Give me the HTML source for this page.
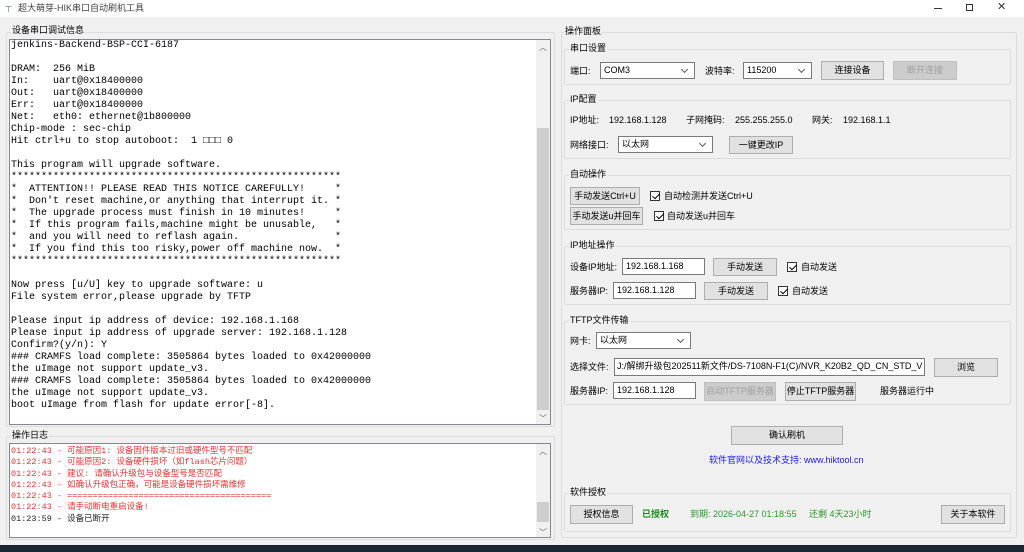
<!DOCTYPE html>
<html><head><meta charset="utf-8"><style>
*{box-sizing:border-box;margin:0;padding:0}
body{width:1024px;height:552px;background:#f0f0f0;position:relative;overflow:hidden;font-family:"Liberation Sans","Noto Sans CJK SC",sans-serif;font-size:9px;color:#000}
.a{position:absolute}
.fr{position:absolute;border:1px solid #dcdcdc;border-radius:2px}
.lg{position:absolute;background:#f0f0f0;padding:0 1px;line-height:11px;font-size:9px;white-space:nowrap}
.t{position:absolute;white-space:nowrap;line-height:12px}
.btn{position:absolute;background:#e1e1e1;border:1px solid #adadad;text-align:center;line-height:16px;white-space:nowrap}
.dis{color:#a0a0a0;background:#cccccc;border-color:#bfbfbf}
.inp{position:absolute;background:#fff;border:1px solid #7a7a7a;line-height:15px;padding-left:3px;white-space:nowrap;overflow:hidden}
.cb{position:absolute;background:#fff;border:1px solid #7a7a7a;line-height:15px;padding-left:3px;white-space:nowrap}
.cb:after{content:"";position:absolute;right:7px;top:4px;width:4px;height:4px;border-right:1px solid #555;border-bottom:1px solid #555;transform:rotate(45deg)}
.chk{position:absolute;width:10px;height:10px;border:1px solid #333;background:#fff}
.chk:after{content:"";position:absolute;left:3px;top:0px;width:3px;height:6px;border-right:1px solid #000;border-bottom:1px solid #000;transform:rotate(45deg)}
pre{font-family:"Liberation Mono","Noto Sans CJK SC",monospace;font-size:10px;line-height:12px}
.sb{position:absolute;background:#f0f0f0}
.th{position:absolute;background:#cdcdcd}
.arr{position:absolute;font-size:8px;color:#606060}
</style></head><body>
<div class="a" style="left:0;top:0;width:1024px;height:17px;background:#fff"></div>
<div class="a" style="left:5px;top:5px;color:#3a6a2a;font-size:8px">⊤</div>
<div class="t" style="left:18px;top:2px;color:#444">超大萌芽-HIK串口自动刷机工具</div>
<div class="a" style="left:934px;top:8px;width:8px;height:1px;background:#333"></div>
<div class="a" style="left:966px;top:4px;width:7px;height:7px;border:1px solid #333"></div>
<div class="t" style="left:997px;top:1px;font-size:11px;color:#333">✕</div>

<div class="fr" style="left:6px;top:32px;width:549px;height:395px"></div>
<div class="lg" style="left:11px;top:25px">设备串口调试信息</div>
<div class="a" style="left:9px;top:39px;width:542px;height:386px;background:#fff;border:1px solid #828790"></div>
<pre class="a" style="left:11px;top:40px">jenkins-Backend-BSP-CCI-6187

DRAM:  256 MiB
In:    uart@0x18400000
Out:   uart@0x18400000
Err:   uart@0x18400000
Net:   eth0: ethernet@1b800000
Chip-mode : sec-chip
Hit ctrl+u to stop autoboot:  1 □□□ 0

This program will upgrade software.
*******************************************************
*  ATTENTION!! PLEASE READ THIS NOTICE CAREFULLY!     *
*  Don't reset machine,or anything that interrupt it. *
*  The upgrade process must finish in 10 minutes!     *
*  If this program fails,machine might be unusable,   *
*  and you will need to reflash again.                *
*  If you find this too risky,power off machine now.  *
*******************************************************

Now press [u/U] key to upgrade software: u
File system error,please upgrade by TFTP

Please input ip address of device: 192.168.1.168
Please input ip address of upgrade server: 192.168.1.128
Confirm?(y/n): Y
### CRAMFS load complete: 3505864 bytes loaded to 0x42000000
the uImage not support update_v3.
### CRAMFS load complete: 3505864 bytes loaded to 0x42000000
the uImage not support update_v3.
boot uImage from flash for update error[-8].</pre>
<div class="sb" style="left:536px;top:40px;width:14px;height:384px"></div>
<div class="th" style="left:537px;top:128px;width:12px;height:282px"></div>
<div class="arr" style="left:539px;top:42px">︿</div>
<div class="arr" style="left:539px;top:413px">﹀</div>

<div class="fr" style="left:6px;top:436px;width:549px;height:104px"></div>
<div class="lg" style="left:11px;top:430px">操作日志</div>
<div class="a" style="left:9px;top:443px;width:542px;height:95px;background:#fff;border:1px solid #828790"></div>
<pre class="a" style="left:11px;top:446px;font-size:8.5px;line-height:11.3px;color:#ee3333">01:22:43 - 可能原因1: 设备固件版本过旧或硬件型号不匹配
01:22:43 - 可能原因2: 设备硬件损坏（如flash芯片问题）
01:22:43 - 建议: 请确认升级包与设备型号是否匹配
01:22:43 - 如确认升级包正确，可能是设备硬件损坏需维修
01:22:43 - ========================================
01:22:43 - 请手动断电重启设备!
<span style="color:#222">01:23:59 - 设备已断开</span></pre>
<div class="sb" style="left:536px;top:444px;width:14px;height:93px"></div>
<div class="th" style="left:537px;top:502px;width:12px;height:20px"></div>
<div class="arr" style="left:539px;top:446px">︿</div>
<div class="arr" style="left:539px;top:527px">﹀</div>

<div class="fr" style="left:561px;top:32px;width:456px;height:506px"></div>
<div class="lg" style="left:564px;top:26px">操作面板</div>

<div class="fr" style="left:564px;top:49px;width:447px;height:36px"></div>
<div class="lg" style="left:569px;top:43px">串口设置</div>
<div class="t" style="left:570px;top:65px">端口:</div>
<div class="cb" style="left:600px;top:62px;width:95px;height:17px">COM3</div>
<div class="t" style="left:705px;top:65px">波特率:</div>
<div class="cb" style="left:743px;top:62px;width:69px;height:17px">115200</div>
<div class="btn" style="left:821px;top:61px;width:63px;height:19px">连接设备</div>
<div class="btn dis" style="left:893px;top:61px;width:64px;height:19px">断开连接</div>

<div class="fr" style="left:564px;top:100px;width:447px;height:59px"></div>
<div class="lg" style="left:569px;top:94px">IP配置</div>
<div class="t" style="left:570px;top:114px">IP地址:</div>
<div class="t" style="left:609px;top:114px">192.168.1.128</div>
<div class="t" style="left:686px;top:114px">子网掩码:</div>
<div class="t" style="left:735px;top:114px">255.255.255.0</div>
<div class="t" style="left:812px;top:114px">网关:</div>
<div class="t" style="left:843px;top:114px">192.168.1.1</div>
<div class="t" style="left:570px;top:139px">网络接口:</div>
<div class="cb" style="left:618px;top:136px;width:95px;height:17px">以太网</div>
<div class="btn" style="left:729px;top:136px;width:64px;height:18px">一键更改IP</div>

<div class="fr" style="left:564px;top:175px;width:447px;height:55px"></div>
<div class="lg" style="left:569px;top:169px">自动操作</div>
<div class="btn" style="left:570px;top:187px;width:70px;height:18px">手动发送Ctrl+U</div>
<div class="chk" style="left:650px;top:191px"></div>
<div class="t" style="left:664px;top:190px">自动检测并发送Ctrl+U</div>
<div class="btn" style="left:570px;top:207px;width:73px;height:18px">手动发送u并回车</div>
<div class="chk" style="left:654px;top:211px"></div>
<div class="t" style="left:667px;top:210px">自动发送u并回车</div>

<div class="fr" style="left:564px;top:246px;width:447px;height:59px"></div>
<div class="lg" style="left:569px;top:240px">IP地址操作</div>
<div class="t" style="left:570px;top:261px">设备IP地址:</div>
<div class="inp" style="left:622px;top:258px;width:83px;height:17px">192.168.1.168</div>
<div class="btn" style="left:713px;top:258px;width:64px;height:18px">手动发送</div>
<div class="chk" style="left:787px;top:262px"></div>
<div class="t" style="left:801px;top:261px">自动发送</div>
<div class="t" style="left:570px;top:285px">服务器IP:</div>
<div class="inp" style="left:613px;top:282px;width:83px;height:17px">192.168.1.128</div>
<div class="btn" style="left:704px;top:282px;width:64px;height:18px">手动发送</div>
<div class="chk" style="left:778px;top:286px"></div>
<div class="t" style="left:792px;top:285px">自动发送</div>

<div class="fr" style="left:564px;top:321px;width:447px;height:84px"></div>
<div class="lg" style="left:569px;top:315px">TFTP文件传输</div>
<div class="t" style="left:570px;top:335px">网卡:</div>
<div class="cb" style="left:596px;top:332px;width:95px;height:17px">以太网</div>
<div class="t" style="left:570px;top:361px">选择文件:</div>
<div class="inp" style="left:614px;top:358px;width:311px;height:18px;padding-left:2px">J:/解绑升级包202511新文件/DS-7108N-F1(C)/NVR_K20B2_QD_CN_STD_V</div>
<div class="btn" style="left:934px;top:358px;width:64px;height:19px">浏览</div>
<div class="t" style="left:570px;top:385px">服务器IP:</div>
<div class="inp" style="left:613px;top:382px;width:83px;height:17px">192.168.1.128</div>
<div class="btn dis" style="left:704px;top:382px;width:72px;height:19px">启动TFTP服务器</div>
<div class="btn" style="left:785px;top:382px;width:71px;height:19px">停止TFTP服务器</div>
<div class="t" style="left:880px;top:385px">服务器运行中</div>

<div class="btn" style="left:731px;top:426px;width:112px;height:19px">确认刷机</div>
<div class="t" style="left:709px;top:454px;color:#1a1aee">软件官网以及技术支持: www.hiktool.cn</div>

<div class="fr" style="left:564px;top:493px;width:447px;height:39px"></div>
<div class="lg" style="left:569px;top:487px">软件授权</div>
<div class="btn" style="left:570px;top:505px;width:63px;height:19px">授权信息</div>
<div class="t" style="left:642px;top:508px;color:#1a8a1a;font-weight:bold">已授权</div>
<div class="t" style="left:690px;top:508px;color:#2a9a2a">到期: 2026-04-27 01:18:55</div>
<div class="t" style="left:809px;top:508px;color:#2a9a2a">还剩 4天23小时</div>
<div class="btn" style="left:941px;top:505px;width:64px;height:19px">关于本软件</div>

<div class="a" style="left:0;top:545px;width:1024px;height:7px;background:#1c2733"></div>
</body></html>
